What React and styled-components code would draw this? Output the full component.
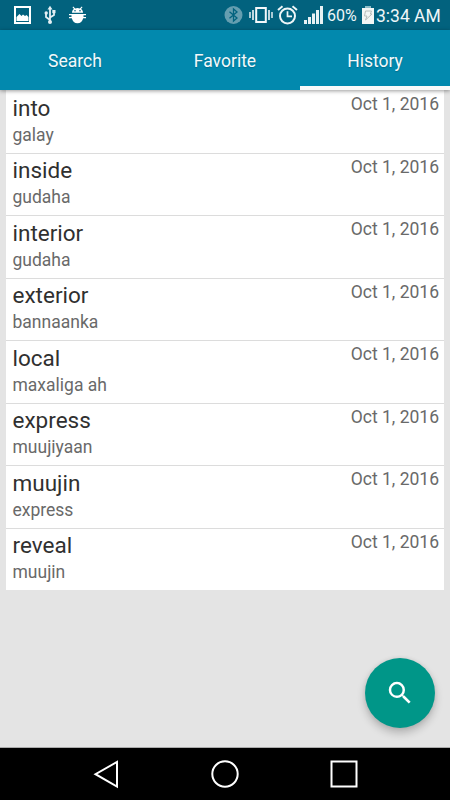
import React from "react";
import styled, { createGlobalStyle } from "styled-components";

const GlobalStyle = createGlobalStyle`
  * { box-sizing: border-box; }
  body { margin: 0; background: #e4e4e4; font-family: Roboto, "Liberation Sans", sans-serif; }
`;

const Screen = styled.div`
  position: relative;
  display: flex;
  flex-direction: column;
  width: 450px;
  height: 800px;
  overflow: hidden;
  background: #e4e4e4;
`;

const StatusBar = styled.header`
  display: flex;
  align-items: center;
  flex: 0 0 30px;
  padding: 0 9px 0 13px;
  background: #02627e;
  color: #eef6f8;
`;

const StatusIcon = styled.svg`
  display: block;
  flex: none;
  width: ${(p) => p.$w}px;
  height: 20px;
  margin-left: ${(p) => p.$gap || 0}px;
`;

const Spacer = styled.div`
  flex: 1;
`;

const StatusText = styled.span`
  display: block;
  width: ${(p) => p.$w}px;
  margin-left: ${(p) => p.$gap}px;
  font-size: ${(p) => p.$size}px;
  line-height: 28px;
  padding-top: 2px;
  white-space: nowrap;
`;

const Tabs = styled.nav`
  display: grid;
  grid-template-columns: repeat(3, 1fr);
  flex: 0 0 60px;
  z-index: 1;
  background: #0289ae;
  box-shadow: 0 1px 4px rgba(0, 0, 0, 0.4);
`;

const Tab = styled.button`
  border: 0;
  border-bottom: 4px solid ${(p) => (p.$active ? "#fafafa" : "transparent")};
  padding: 6px 0 0;
  background: none;
  color: #f3f9fb;
  font: 400 17.5px/50px Roboto, "Liberation Sans", sans-serif;
  text-align: center;
  text-shadow: 0 1px 1px rgba(0, 60, 80, 0.35);
`;

const HistoryList = styled.ul`
  flex: 1;
  margin: 0;
  padding: 0 6px;
  list-style: none;
`;

const Row = styled.li`
  display: flex;
  justify-content: space-between;
  height: 62.5px;
  padding: 0 5px 0 6.5px;
  background: #fff;
  border-top: 1px solid #dcdcdc;
  &:first-child {
    border-top-color: #fff;
  }
`;

const Word = styled.div`
  padding-top: 3.5px;
  color: #303030;
  font-size: 22.5px;
  line-height: 27px;
`;

const Translation = styled.div`
  color: #696969;
  font-size: 17.5px;
  line-height: 26px;
`;

const DateLabel = styled.time`
  color: #696969;
  font-size: 17.5px;
  line-height: 26px;
`;

const SearchButton = styled.button`
  position: absolute;
  right: 15px;
  bottom: 72.5px;
  display: grid;
  place-items: center;
  width: 70px;
  height: 70px;
  padding: 0;
  border: 0;
  border-radius: 50%;
  background: #009688;
  box-shadow: 0 5px 9px rgba(0, 0, 0, 0.22), 0 0 4px rgba(0, 0, 0, 0.08);
`;

const SearchIcon = styled.svg`
  width: 30px;
  height: 30px;
  fill: #fff;
`;

const NavBar = styled.footer`
  display: grid;
  grid-template-columns: 119px 119px 119px;
  justify-content: center;
  align-items: center;
  flex: 0 0 53px;
  border-top: 1px solid #aaa;
  background: #000;
`;

const NavIcon = styled.svg`
  justify-self: center;
  width: 32px;
  height: 32px;
  fill: none;
  stroke: #fff;
  stroke-width: 2;
`;

const history = [
  ["into", "galay"],
  ["inside", "gudaha"],
  ["interior", "gudaha"],
  ["exterior", "bannaanka"],
  ["local", "maxaliga ah"],
  ["express", "muujiyaan"],
  ["muujin", "express"],
  ["reveal", "muujin"],
];

function NotificationIcons() {
  return (
    <>
      <StatusIcon $w={19} viewBox="0 0 19 20">
        <path d="M2 2H17V18H2Z" fill="none" stroke="#fff" strokeWidth="2" />
        <path d="M3.5 16V12L6.5 9L8.5 11L10 9.5L12 11L13.5 10L15.5 12V16Z" fill="#fff" />
      </StatusIcon>
      <StatusIcon $w={12} $gap={12} viewBox="0 0 12 20">
        <path d="M6 3V17M6 15L2 12V7.5M6 12.5L10 10V5.5" fill="none" stroke="#e4eff4" strokeWidth="1.8" />
        <path d="M6 .8L8.5 4.5H3.5Z" fill="#e4eff4" />
        <circle cx="6" cy="17" r="2" fill="#e4eff4" />
        <circle cx="2.2" cy="8" r="1.7" fill="#e4eff4" />
        <path d="M8.3 5H11.5V8.2H8.3Z" fill="#e4eff4" />
      </StatusIcon>
      <StatusIcon $w={19} $gap={12} viewBox="0 0 19 20">
        <path
          d="M4 7.7C4 5.9 4.8 4.7 6 4L4.5 2.2L5.2 1.6L7.2 3.4Q9.5 2.6 11.8 3.4L13.8 1.6L14.5 2.2L13 4C14.2 4.7 15 5.9 15 7.7Z"
          fill="#fff"
        />
        <path
          d="M1 9H18V10.3H15.5V12H18V13.3H15.2C14.5 16.4 12.4 18.3 9.5 18.3S4.5 16.4 3.8 13.3H1V12H3.5V10.3H1Z"
          fill="#fff"
        />
        <circle cx="7" cy="5.8" r=".8" fill="#02627e" />
        <circle cx="12" cy="5.8" r=".8" fill="#02627e" />
      </StatusIcon>
    </>
  );
}

function SystemIcons() {
  return (
    <>
      <StatusIcon $w={19} viewBox="0 0 19 20">
        <circle cx="9.5" cy="10" r="9" fill="#659eb0" />
        <path d="M5.5 6.7L13 13L9.5 16V4L13 7L5.5 13.3" fill="none" stroke="#02627e" strokeWidth="1.3" />
      </StatusIcon>
      <StatusIcon $w={24} $gap={6} viewBox="0 0 24 20">
        <path d="M7.2 3H16.8V17H7.2Z" fill="none" stroke="#f4f8fa" strokeWidth="2" />
        <path d="M1 7V13M23 7V13" stroke="#e1edf1" strokeWidth="1.5" />
        <path d="M4 5V15M20 5V15" stroke="#e1edf1" strokeWidth="1.7" />
      </StatusIcon>
      <StatusIcon $w={21} $gap={4} viewBox="0 0 21 20">
        <circle cx="10.5" cy="11" r="7.5" fill="none" stroke="#eef6f8" strokeWidth="2" />
        <path d="M1 5L5.5 1.3M20 5L15.5 1.3" stroke="#eef6f8" strokeWidth="2" />
        <path d="M10.5 6.3V11.4H15" fill="none" stroke="#eef6f8" strokeWidth="1.7" />
      </StatusIcon>
      <StatusIcon $w={19} $gap={6} viewBox="0 0 19 20">
        <path
          d="M0 15H3V19H0ZM4 12H7V19H4ZM8 8.5H11V19H8ZM12 5H15V19H12ZM16 1H19V19H16Z"
          fill="#e7f1f4"
        />
      </StatusIcon>
    </>
  );
}

function BatteryIcon() {
  return (
    <StatusIcon $w={12} $gap={4} viewBox="0 0 12 20">
      <path d="M3 1H9V3H3Z" fill="#8ebdc9" />
      <path d="M0 3H12V19H0Z" fill="#f3f6f5" />
      <path d="M3.5 6H9.5L8.3 9H10L3.5 15L5 11H2.5Z" fill="none" stroke="#b6bcba" strokeWidth="1" />
    </StatusIcon>
  );
}

export default function App() {
  return (
    <>
      <GlobalStyle />
      <Screen>
        <StatusBar>
          <NotificationIcons />
          <Spacer />
          <SystemIcons />
          <StatusText $w={31} $gap={4} $size={16}>60%</StatusText>
          <BatteryIcon />
          <StatusText $w={65} $gap={2} $size={17.5}>3:34 AM</StatusText>
        </StatusBar>
        <Tabs>
          <Tab>Search</Tab>
          <Tab>Favorite</Tab>
          <Tab $active>History</Tab>
        </Tabs>
        <HistoryList>
          {history.map(([word, translation]) => (
            <Row key={word}>
              <div>
                <Word>{word}</Word>
                <Translation>{translation}</Translation>
              </div>
              <DateLabel>Oct 1, 2016</DateLabel>
            </Row>
          ))}
        </HistoryList>
        <NavBar>
          <NavIcon viewBox="0 0 32 32"><path d="M27 4V28.5L5.5 16.2Z" /></NavIcon>
          <NavIcon viewBox="0 0 32 32"><circle cx="16" cy="16" r="12.7" /></NavIcon>
          <NavIcon viewBox="0 0 32 32"><path d="M3.5 3.5H28.5V28.5H3.5Z" /></NavIcon>
        </NavBar>
        <SearchButton aria-label="Search history">
          <SearchIcon viewBox="0 0 24 24">
            <path d="M15.5 14h-.79l-.28-.27A6.47 6.47 0 0 0 16 9.5 6.5 6.5 0 1 0 9.5 16c1.61 0 3.09-.59 4.23-1.57l.27.28v.79l5 4.99L20.49 19l-4.99-5zm-6 0C7.01 14 5 11.99 5 9.5S7.01 5 9.5 5 14 7.01 14 9.5 11.99 14 9.5 14z" />
          </SearchIcon>
        </SearchButton>
      </Screen>
    </>
  );
}
